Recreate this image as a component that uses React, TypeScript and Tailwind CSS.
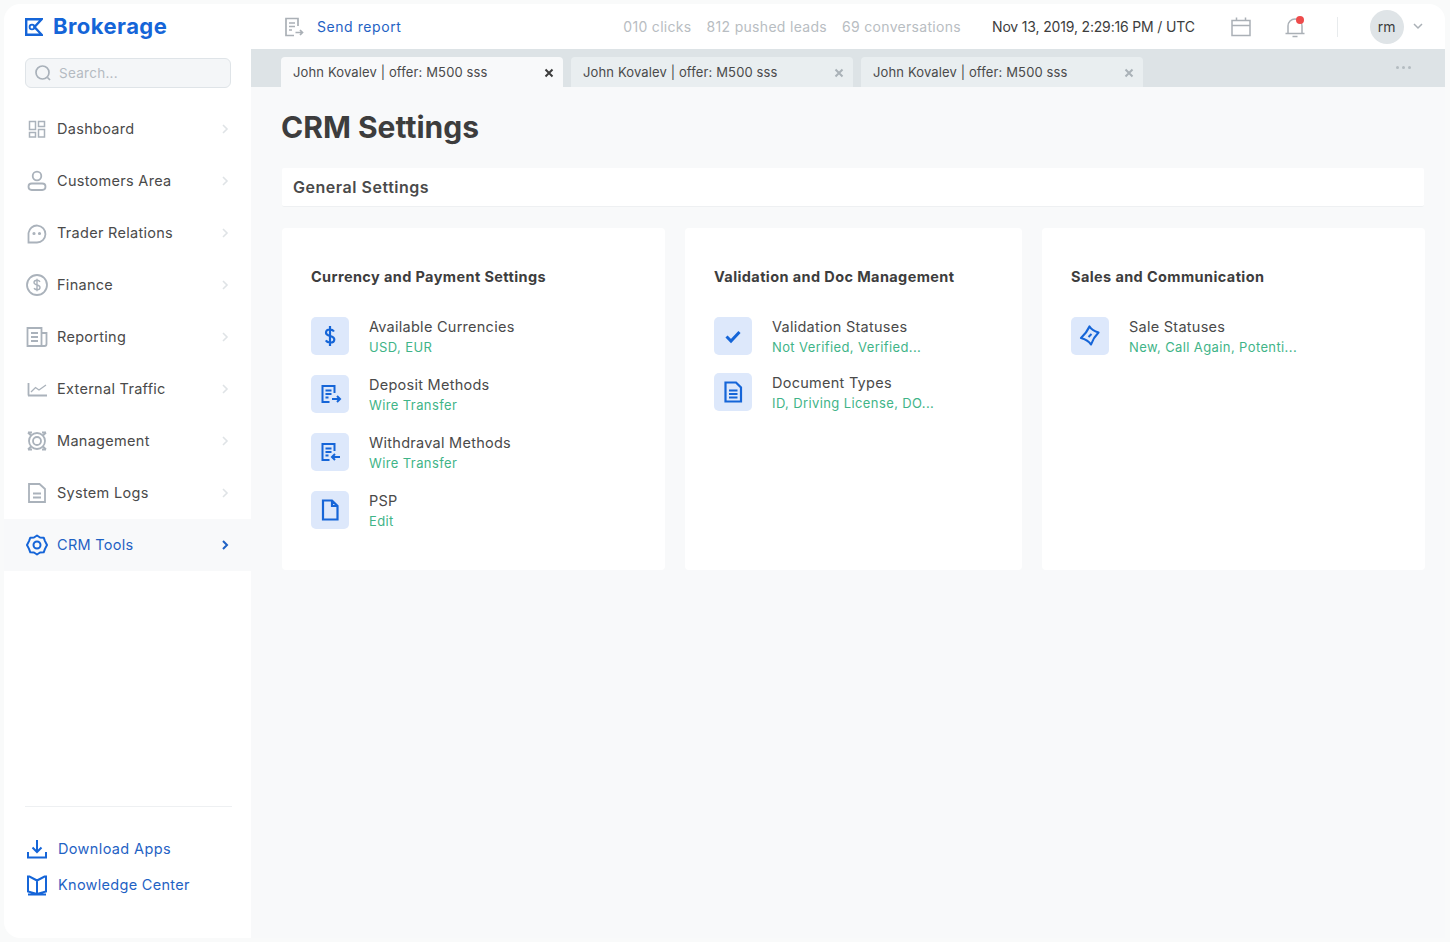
import { ReactNode } from "react";

function Ico({ children }: { children: ReactNode }) {
  return (
    <svg width="24" height="24" viewBox="0 0 24 24" fill="none" stroke="currentColor" strokeWidth="1.8">
      {children}
    </svg>
  );
}

const navItems: { label: string; icon: ReactNode }[] = [
  {
    label: "Dashboard",
    icon: (
      <g strokeWidth="1.5">
        <rect x="4.5" y="4.5" width="6" height="8" />
        <rect x="13.5" y="4.5" width="6" height="5" />
        <rect x="4.5" y="15.5" width="6" height="4.5" />
        <rect x="13.5" y="12.5" width="6" height="7.5" />
      </g>
    ),
  },
  {
    label: "Customers Area",
    icon: (
      <>
        <circle cx="12" cy="7" r="4.3" />
        <rect x="3.5" y="14.5" width="17" height="6.5" rx="3.2" />
      </>
    ),
  },
  {
    label: "Trader Relations",
    icon: (
      <>
        <path d="M3.5 21.5V12a8.500 8.500 0 1 1 8.500 9.500z" />
        <circle cx="9" cy="12.5" r="0.7" fill="currentColor" />
        <circle cx="14.5" cy="12.5" r="0.7" fill="currentColor" />
      </>
    ),
  },
  {
    label: "Finance",
    icon: (
      <>
        <circle cx="12" cy="12" r="10" />
        <path
          d="M15 8.8c-.6-1-1.700-1.500-3-1.500-1.700 0-3 .9-3 2.300 0 3.100 6 1.700 6 4.800 0 1.400-1.300 2.300-3 2.300-1.300 0-2.400-.5-3-1.500M12 5.800v12.400"
          strokeWidth="1.4"
        />
      </>
    ),
  },
  {
    label: "Reporting",
    icon: (
      <>
        <path d="M2.500 3h14v18h-14zM16.500 8h5v11a2 2 0 0 1-2 2h-3" />
        <path d="M6 8h7M6 12h7M6 16h7" />
      </>
    ),
  },
  {
    label: "External Traffic",
    icon: (
      <>
        <path d="M3.500 6v12.500M3 18.500h19" />
        <path d="M6 15l4.500-4.500 3.500 2.500 7-5" strokeWidth="1.3" />
      </>
    ),
  },
  {
    label: "Management",
    icon: (
      <>
        <circle cx="12" cy="12" r="8" />
        <circle cx="12" cy="12" r="4" />
        <path d="M3 3.500l3 3M21 3.500l-3 3M3 20.500l3-3M21 20.500l-3-3M3 3.500h4M21 3.500h-4M3 20.500h4M21 20.500h-4" />
      </>
    ),
  },
  {
    label: "System Logs",
    icon: (
      <>
        <path d="M4 3h10.500l5.500 5v13H4z" />
        <path d="M8 12.500h8M8 16.500h8" />
      </>
    ),
  },
];

function NavRow({ label, icon }: { label: string; icon: ReactNode }) {
  return (
    <div className="flex h-[52px] items-center pl-[21px] pr-[22px] text-[#4a4a4a]">
      <span className="flex w-[24px] justify-center text-[#aab2bb]">
        <Ico>{icon}</Ico>
      </span>
      <span className="ml-[8px] text-[14.5px] tracking-[0.02em]">{label}</span>
      <svg width="8" height="10" viewBox="0 0 8 10" fill="none" stroke="#dfe3e6" strokeWidth="1.6" className="ml-auto">
        <path d="M2 1l4 4-4 4" />
      </svg>
    </div>
  );
}

function Sidebar() {
  return (
    <aside className="flex w-[247px] shrink-0 flex-col rounded-l-[16px] bg-white">
      <div className="flex h-[46px] items-center pl-[21px]">
        <svg width="18" height="18" viewBox="0 0 18 18" fill="none" stroke="#1565d8" strokeWidth="2.4">
          <path d="M16.700 1.200H1.200v15.600h15.500L9.500 9z" />
          <circle cx="7" cy="9" r="2.400" strokeWidth="1.8" />
        </svg>
        <span className="ml-[10px] pb-[2px] text-[22px] font-bold tracking-[0.02em] text-[#1565d8]">Brokerage</span>
      </div>
      <div className="mx-[21px] mt-[8px] flex h-[30px] w-[206px] items-center rounded-[6px] border border-[#dfe4e8] bg-[#f4f6f8] pl-[8px]">
        <svg width="18" height="18" viewBox="0 0 18 18" fill="none" stroke="#a9b1ba" strokeWidth="1.7">
          <circle cx="8.500" cy="8.500" r="6.500" />
          <path d="M13.500 13.500l2.500 2.500" />
        </svg>
        <span className="ml-[7px] text-[13.5px] tracking-[0.02em] text-[#b5bbc2]">Search...</span>
      </div>
      <nav className="mt-[15px]">
        {navItems.map((item) => (
          <NavRow key={item.label} label={item.label} icon={item.icon} />
        ))}
        <div className="flex h-[52px] items-center bg-[#f8f9fa] pl-[21px] pr-[22px] text-[#1f62c4]">
          <span className="flex w-[24px] justify-center text-[#1565d8]">
            <Ico>
              <path
                d="M12 2.500l3 2 3.700.2 1.300 3.400 2 3.900-2 3.900-1.300 3.400-3.700.2-3 2-3-2-3.700-.2L4 15.900l-2-3.900 2-3.900 1.300-3.400 3.700-.2z"
                strokeWidth="2"
                strokeLinejoin="round"
              />
              <circle cx="12" cy="12" r="3.5" strokeWidth="2" />
            </Ico>
          </span>
          <span className="ml-[8px] text-[14.5px] tracking-[0.02em]">CRM Tools</span>
          <svg width="8" height="10" viewBox="0 0 8 10" fill="none" stroke="#1f62c4" strokeWidth="2" className="ml-auto">
            <path d="M2 1l4 4-4 4" />
          </svg>
        </div>
      </nav>
      <div className="mt-auto pb-[35px]">
        <div className="mx-[21px] h-px w-[207px] bg-[#eef0f2]" />
        <div className="mt-[24px] flex h-[36px] items-center pl-[22px] text-[#1f62c4]">
          <svg width="22" height="22" viewBox="0 0 22 22" fill="none" stroke="#1565d8" strokeWidth="2">
            <path d="M11 2v12M6.500 9.500l4.500 4.500 4.500-4.500M2 14v5.500h18V14" />
          </svg>
          <span className="ml-[10px] text-[14.5px] tracking-[0.025em]">Download Apps</span>
        </div>
        <div className="flex h-[36px] items-center pl-[22px] text-[#1f62c4]">
          <svg width="22" height="22" viewBox="0 0 22 22" fill="none" stroke="#1565d8" strokeWidth="2">
            <path d="M11 6.500L3.500 2.500H2v15l9 2.500 9-2.500v-15h-1.500zM11 6.500V20M2 20.500h18" />
          </svg>
          <span className="ml-[10px] text-[14.5px] tracking-[0.02em]">Knowledge Center</span>
        </div>
      </div>
    </aside>
  );
}

function Tab({ active }: { active?: boolean }) {
  return (
    <div
      className={
        active
          ? "flex h-[30px] w-[282px] items-center rounded-t-[4px] bg-[#f8f9fa] pl-[12px] pr-[9px] pt-[2px]"
          : "flex h-[30px] w-[282px] items-center rounded-t-[4px] bg-[#e9eef0] pl-[12px] pr-[9px] pt-[2px]"
      }
    >
      <span className="text-[13px] tracking-[0.01em] text-[#4a4a4a]">John Kovalev | offer: M500 sss</span>
      <svg
        width="10"
        height="10"
        viewBox="0 0 10 10"
        fill="none"
        stroke={active ? "#3d3d3d" : "#aab2b8"}
        strokeWidth="2"
        className="ml-auto"
      >
        <path d="M1.500 1.500l7 7M8.500 1.500l-7 7" />
      </svg>
    </div>
  );
}

function Header() {
  return (
    <header className="flex h-[45px] items-center rounded-tr-[16px] bg-white pl-[33px]">
      <svg width="20" height="20" viewBox="0 0 20 20" fill="none" stroke="#aab0b6" strokeWidth="1.7">
        <path d="M14 9V1.500H2v17h8M5 6h6M5 9.500h6M5 13h3M11.500 15.500h7M16 13l2.500 2.500L16 18" />
      </svg>
      <span className="ml-[13px] text-[14px] tracking-[0.04em] text-[#1f62c4]">Send report</span>
      <div className="ml-[222px] flex gap-[15px] text-[14px] tracking-[0.022em] text-[#b8bdc2]">
        <span>010 clicks</span>
        <span>812 pushed leads</span>
        <span>69 conversations</span>
      </div>
      <span className="ml-[31px] text-[14px] tracking-[-0.012em] text-[#3d3d3d]">Nov 13, 2019, 2:29:16 PM / UTC</span>
      <svg width="22" height="22" viewBox="0 0 22 22" fill="none" stroke="#aab0b6" strokeWidth="1.5" className="ml-[35px]">
        <path d="M2 4.500h18v15H2zM2 9.500h18M6.500 1.500v3M15.500 1.500v3" />
      </svg>
      <div className="relative ml-[31px] h-[24px] w-[24px]">
        <svg width="24" height="24" viewBox="0 0 24 24" fill="none" stroke="#aab0b6" strokeWidth="1.5">
          <path d="M2.500 18.500h19M5 18.500V11a7 7 0 0 1 14 0v7.500M9.500 21.500h5" />
        </svg>
        <span className="absolute right-[3px] top-[1px] h-[8px] w-[8px] rounded-full bg-[#ee4b4b]" />
      </div>
      <div className="ml-[30px] h-[20px] w-px bg-[#e8ebed]" />
      <div className="ml-[32px] flex h-[34px] w-[34px] items-center justify-center rounded-full bg-[#dfe4e7] text-[14px] text-[#3d3d3d]">
        rm
      </div>
      <svg width="10" height="7" viewBox="0 0 10 7" fill="none" stroke="#aab0b6" strokeWidth="1.5" className="ml-[9px]">
        <path d="M1 1l4 4 4-4" />
      </svg>
    </header>
  );
}

type Setting = { title: string; sub: string; icon: ReactNode };

const currencyRows: Setting[] = [
  {
    title: "Available Currencies",
    sub: "USD, EUR",
    icon: (
      <path
        d="M16 7.500C15 6 13.700 5.500 12 5.500c-2.300 0-4 1.200-4 3.200 0 4.300 8.300 2.400 8.300 6.700 0 2-1.800 3.100-4.300 3.100-1.800 0-3.300-.7-4.200-2.100M12 2v20"
        strokeWidth="2.2"
      />
    ),
  },
  {
    title: "Deposit Methods",
    sub: "Wire Transfer",
    icon: <path d="M16.500 11V4h-12v16h7M7.500 8.500h6M7.500 12h6M7.500 15.500h3M14 17h8M19 14l3 3-3 3" strokeWidth="2" />,
  },
  {
    title: "Withdraval Methods",
    sub: "Wire Transfer",
    icon: <path d="M16.500 11V4h-12v16h7M7.500 8.500h6M7.500 12h6M7.500 15.500h3M22 17h-8M17 14l-3 3 3 3" strokeWidth="2" />,
  },
  {
    title: "PSP",
    sub: "Edit",
    icon: <path d="M5 2.500h9l5.500 5.500v13.500H5zM14 2.500V8h5.500" strokeWidth="2.2" />,
  },
];

const validationRows: Setting[] = [
  {
    title: "Validation Statuses",
    sub: "Not Verified, Verified...",
    icon: <path d="M5.500 12.500l4.500 4.500 8.500-9" strokeWidth="3" />,
  },
  {
    title: "Document Types",
    sub: "ID, Driving License, DO...",
    icon: <path d="M4.500 2.500H15l5 5v14H4.500zM8 10.500h8.500M8 14h8.500M8 17.500h8.500" strokeWidth="2.2" />,
  },
];

const salesRows: Setting[] = [
  {
    title: "Sale Statuses",
    sub: "New, Call Again, Potenti...",
    icon: (
      <>
        <path
          d="M11.500 2.500Q14 6.500 20.500 8.500Q15.500 13.500 13 20.500Q10 16 3 14Q8.500 9 11.500 2.500Z"
          strokeWidth="2.2"
          strokeLinejoin="round"
        />
        <path d="M10.500 13l3-3" strokeWidth="2" />
      </>
    ),
  },
];

function SettingRow({ row }: { row: Setting }) {
  return (
    <div className="flex">
      <div className="flex h-[38px] w-[38px] shrink-0 items-center justify-center rounded-[5px] bg-[#dde8fb] text-[#1565d8]">
        <Ico>{row.icon}</Ico>
      </div>
      <div className="ml-[20px]">
        <div className="text-[14.5px] leading-[20px] tracking-[0.018em] text-[#4a4a4a]">{row.title}</div>
        <div className="text-[13px] leading-[20px] tracking-[0.03em] text-[#3fb488]">{row.sub}</div>
      </div>
    </div>
  );
}

function SettingsCard({ title, rows, gap }: { title: string; rows: Setting[]; gap: string }) {
  return (
    <div className="h-[342px] rounded-[4px] bg-white px-[29px] pt-[40px]">
      <h3 className="text-[14.5px] font-bold leading-[18px] tracking-[0.027em] text-[#3d3d3d]">{title}</h3>
      <div className={"mt-[31px] flex flex-col " + gap}>
        {rows.map((row) => (
          <SettingRow key={row.title} row={row} />
        ))}
      </div>
    </div>
  );
}

export default function App() {
  return (
    <div className="flex h-[942px] w-[1450px] overflow-hidden bg-[#f9fafa] p-[4px] pr-[5px] font-[family-name:Inter,sans-serif]">
      <Sidebar />
      <div className="flex min-w-0 flex-1 flex-col">
        <Header />
        <div className="relative flex h-[38px] items-end gap-[8px] bg-[#dde3e6] pl-[30px]">
          <Tab active />
          <Tab />
          <Tab />
          <span className="absolute right-[34px] top-[17px] flex gap-[3px]">
            <i className="h-[3px] w-[3px] rounded-full bg-[#b4bcc1]" />
            <i className="h-[3px] w-[3px] rounded-full bg-[#b4bcc1]" />
            <i className="h-[3px] w-[3px] rounded-full bg-[#b4bcc1]" />
          </span>
        </div>
        <main className="flex-1 bg-[#f8f9fa] pl-[30px] pr-[20px]">
          <h1 className="mt-[21px] text-[30px] font-bold leading-[38px] text-[#3d3d3d]">CRM Settings</h1>
          <div className="mx-[1px] mt-[22px] flex h-[39px] items-center rounded-[2px] border-b border-[#eef0f2] bg-white pl-[11px] text-[16px] font-semibold tracking-[0.033em] text-[#4a4a4a]">
            General Settings
          </div>
          <div className="mt-[21px] grid grid-cols-[383px_337px_383px] gap-[20px] pl-[1px]">
            <SettingsCard title="Currency and Payment Settings" rows={currencyRows} gap="gap-[18px]" />
            <SettingsCard title="Validation and Doc Management" rows={validationRows} gap="gap-[16px]" />
            <SettingsCard title="Sales and Communication" rows={salesRows} gap="gap-[18px]" />
          </div>
        </main>
      </div>
    </div>
  );
}
